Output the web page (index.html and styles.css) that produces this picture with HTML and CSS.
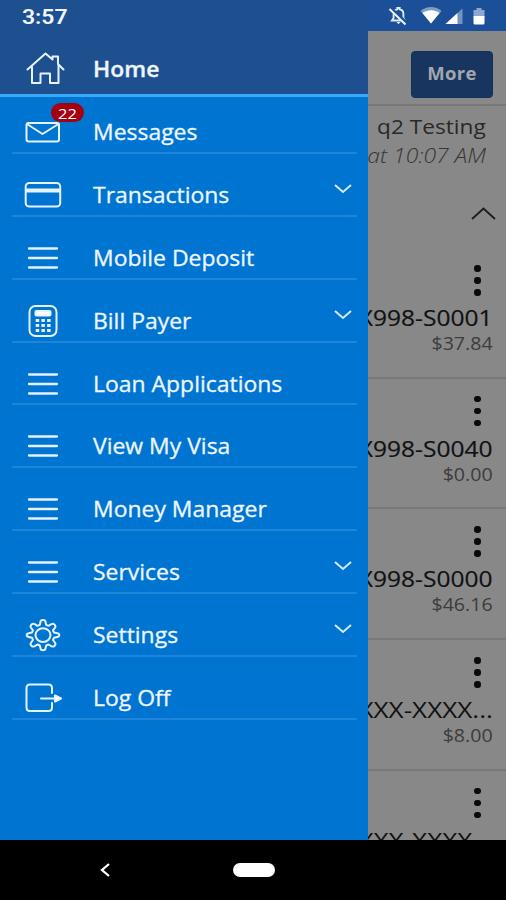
FILE: index.html
```html
<!DOCTYPE html>
<html lang="en">
<head>
  <meta charset="UTF-8">
  <meta name="viewport" content="width=device-width, initial-scale=1.0">
  <title>Mobile Banking</title>
  <link rel="stylesheet" href="styles.css">
</head>
<body>
  <header class="status-bar">
    <span class="clock">3:57</span>
    <svg class="status-icons" width="102" height="31" viewBox="0 0 102 31">
      <g transform="translate(-2 0)">
        <path d="M6 20.500h13l-1.600-2.500v-4c0-2.500-1.300-4.200-3.700-4.700V8h-2.400v1.300c-2.400.5-3.700 2.200-3.700 4.700v4z" fill="none" stroke="#dfe9f6" stroke-width="1.900"/>
        <path d="M10.500 22h4l-2 2.300z" fill="#dfe9f6"/>
        <path d="M4.500 8.500l16 15" stroke="#1c4f96" stroke-width="4"/>
        <path d="M3.500 9l16 15.500" stroke="#f2f6fc" stroke-width="1.900"/>
      </g>
      <g transform="translate(8 -.5)">
        <path d="M35 24L24.500 11.500c6-5.300 15-5.300 21 0z" fill="#7f9cc8"/>
        <path d="M35 24L26.500 13.500c5-3.600 12-3.600 17 0z" fill="#fff"/>
        <path d="M49.500 24.500L66.500 9v15.500z" fill="#7593c1"/>
        <path d="M49.500 24.500L61.500 13.500v11z" fill="#fff"/>
        <path d="M77.500 10.500h3V8.500h5v2h3v7H77.500v-7z" fill="#8ea7cd"/>
        <path d="M77.500 16.500H88.500V23.500q0 1.500-1.500 1.500H79q-1.500 0-1.500-1.500z" fill="#fff"/>
      </g>
    </svg>
  </header>

  <main class="content">
    <nav class="drawer">
      <a class="item home">
        <svg class="icon" viewBox="0 0 40 40">
          <path d="M2.500 20.500L20.500 4.500l7 6V7.500h5.500v7.500l5.500 5.500M7 17.500v16.500h8.500V24.500h9.500V34h8.500V16"/>
        </svg>
        <span class="label">Home</span>
      </a>
      <a class="item first">
        <svg class="icon" viewBox="0 0 40 40">
          <rect x="1.500" y="11" width="32.500" height="18.500" rx="2"/>
          <path d="M2 12l15.500 10L33.500 12"/>
        </svg>
        <span class="badge"><span>22</span></span>
        <span class="label">Messages</span>
      </a>
      <a class="item">
        <svg class="icon" viewBox="0 0 40 40">
          <rect x=".7" y="8" width="34.500" height="23.500" rx="3.500"/>
          <path d="M1 15.500h34" stroke-width="4" stroke-linecap="butt"/>
        </svg>
        <span class="label">Transactions</span>
        <svg class="chevron" viewBox="0 0 18 10"><path d="M1 1l8 7 8-7"/></svg>
      </a>
      <a class="item">
        <svg class="icon" viewBox="0 0 40 40"><path d="M4 10.500h28M4 20h28M4 29.500h28" stroke-width="2.300"/></svg>
        <span class="label">Mobile Deposit</span>
      </a>
      <a class="item">
        <svg class="icon" viewBox="0 0 40 40">
          <rect x="4.500" y="5" width="27" height="30" rx="6"/>
          <rect class="solid" x="10.500" y="10" width="15" height="4.500" rx="1"/>
          <path d="M10.700 19.500h15M10.700 24.500h15M10.700 29.500h15" stroke-width="2.800" stroke-dasharray="3.500 2.200" stroke-linecap="butt"/>
        </svg>
        <span class="label">Bill Payer</span>
        <svg class="chevron" viewBox="0 0 18 10"><path d="M1 1l8 7 8-7"/></svg>
      </a>
      <a class="item">
        <svg class="icon" viewBox="0 0 40 40"><path d="M4 10.500h28M4 20h28M4 29.500h28" stroke-width="2.300"/></svg>
        <span class="label">Loan Applications</span>
      </a>
      <a class="item">
        <svg class="icon" viewBox="0 0 40 40"><path d="M4 10.500h28M4 20h28M4 29.500h28" stroke-width="2.300"/></svg>
        <span class="label">View My Visa</span>
      </a>
      <a class="item">
        <svg class="icon" viewBox="0 0 40 40"><path d="M4 10.500h28M4 20h28M4 29.500h28" stroke-width="2.300"/></svg>
        <span class="label">Money Manager</span>
      </a>
      <a class="item">
        <svg class="icon" viewBox="0 0 40 40"><path d="M4 10.500h28M4 20h28M4 29.500h28" stroke-width="2.300"/></svg>
        <span class="label">Services</span>
        <svg class="chevron" viewBox="0 0 18 10"><path d="M1 1l8 7 8-7"/></svg>
      </a>
      <a class="item">
        <svg class="icon" viewBox="0 0 40 40">
          <path d="M15.500 7q0-2 2.500-2t2.500 2l.7 2.800 2.300 1 2.800-1.700q1.800-1 3.300.5t.3 3.200L28 15.300l1 2.200 3.300.7q2 .3 2 1.900t-2 1.900l-3.300.7-1 2.300 1.900 2.500q1.200 1.700-.3 3.200t-3.300.5l-2.800-1.700-2.300 1-.7 2.800q0 2-2.500 2t-2.500-2l-.7-2.800-2.300-1-2.800 1.700q-1.800 1-3.300-.5t-.3-3.200L8 25l-1-2.300-3.300-.7q-2-.3-2-1.900t2-1.900l3.300-.7 1-2.200-1.900-2.500q-1.200-1.700.3-3.200t3.300-.5l2.800 1.700 2.300-1z"/>
          <ellipse cx="18" cy="20.100" rx="7.500" ry="6.800"/>
        </svg>
        <span class="label">Settings</span>
        <svg class="chevron" viewBox="0 0 18 10"><path d="M1 1l8 7 8-7"/></svg>
      </a>
      <a class="item">
        <svg class="icon" viewBox="0 0 40 40">
          <path d="M27 15v-5q0-3.500-3.500-3.500H5Q1.500 6.500 1.500 10v19.500q0 3.500 3.500 3.500h18.500q3.500 0 3.500-3.500v-4.500M16 20.500H30"/>
          <path class="solid" d="M30 17.500l6 3-6 3z"/>
        </svg>
        <span class="label">Log Off</span>
      </a>
    </nav>

    <section class="page">
      <div class="toolbar"><button class="more">More</button></div>
      <div class="greeting">
        <p class="user">q2 Testing</p>
        <p class="login">at 10:07 AM</p>
      </div>
      <div class="group">
        <svg width="25" height="13" viewBox="0 0 25 13"><path d="M1 12L12.500 1.500 24 12" fill="none" stroke="#1c1c1c" stroke-width="1.800"/></svg>
      </div>
      <div class="account">
        <div class="dots"><i></i><i></i><i></i></div>
        <p class="name">X998-S0001</p>
        <p class="amount">$37.84</p>
      </div>
      <div class="account">
        <div class="dots"><i></i><i></i><i></i></div>
        <p class="name">X998-S0040</p>
        <p class="amount">$0.00</p>
      </div>
      <div class="account">
        <div class="dots"><i></i><i></i><i></i></div>
        <p class="name">X998-S0000</p>
        <p class="amount">$46.16</p>
      </div>
      <div class="account">
        <div class="dots"><i></i><i></i><i></i></div>
        <p class="name masked">XXX-XXXX...</p>
        <p class="amount">$8.00</p>
      </div>
      <div class="account">
        <div class="dots"><i></i><i></i><i></i></div>
        <p class="name masked">XXX-XXXX...</p>
      </div>
    </section>
  </main>

  <footer class="nav-bar">
    <svg class="back" width="10" height="14" viewBox="0 0 10 14"><path d="M9 1L2 7l7 6" fill="none" stroke="#fff" stroke-width="2.300"/></svg>
    <span class="pill"></span>
  </footer>
</body>
</html>
```
FILE: styles.css
```css
* {
  box-sizing: border-box;
}

body {
  margin: 0;
  width: 506px;
  height: 900px;
  overflow: hidden;
  display: flex;
  flex-direction: column;
  font-family: "Open Sans", sans-serif;
  background: #000;
}

p {
  margin: 0;
}

.status-bar {
  height: 31px;
  flex: none;
  display: flex;
  justify-content: space-between;
  align-items: center;
  padding: 0 16px 0 22px;
  background: linear-gradient(90deg, #1e5090 368px, #1b4f98 368px);
}

.clock {
  font: 600 20.500px/31px Roboto, sans-serif;
  color: #f2f6fc;
  transform: scaleX(1.12);
  transform-origin: left;
  padding-top: 3px;
}

.content {
  height: 808.500px;
  flex: none;
  display: flex;
  overflow: hidden;
}

.drawer {
  width: 368px;
  flex: none;
  background: #0074d1;
}

.item {
  display: flex;
  align-items: center;
  position: relative;
  height: 62.900px;
  margin: 0 11px 0 12px;
  padding: 21px 5.500px 0 13px;
  border-bottom: 2px solid #1f84da;
  color: #eef6ff;
}

.item.first {
  height: 56.900px;
  padding-top: 15px;
}

.item.home {
  height: 66px;
  margin: 0;
  padding: 13px 0 0 25px;
  background: #1e5090;
  border-bottom: 3px solid #3ba8f8;
}

.icon {
  width: 40px;
  height: 40px;
  flex: none;
  overflow: visible;
  fill: none;
  stroke: #e6f2ff;
  stroke-width: 2;
  stroke-linejoin: round;
  stroke-linecap: round;
}

.icon .solid {
  fill: #fff;
}

.label {
  margin-left: 28px;
  font-size: 21.200px;
  font-weight: 500;
  line-height: 30px;
  white-space: nowrap;
  -webkit-text-stroke: 0.300px;
  transform: scaleX(1.083);
  transform-origin: left;
}

.home .label {
  font-weight: 600;
}

.badge {
  position: absolute;
  left: 39px;
  top: 6px;
  width: 33px;
  height: 19px;
  border-radius: 10px;
  background: #a30010;
  color: #fff;
  font-size: 15px;
  font-weight: 500;
  line-height: 21px;
  text-align: center;
}

.badge span {
  display: block;
  transform: scaleX(1.1);
}

.chevron {
  width: 18px;
  height: 10px;
  margin-left: auto;
  margin-bottom: 12px;
  fill: none;
  stroke: #d6eaff;
  stroke-width: 2;
}

.page {
  flex: 1;
  min-width: 0;
  overflow: hidden;
  background: #888;
}

.toolbar {
  height: 75px;
  display: flex;
  justify-content: flex-end;
  padding: 20px 13px 0 0;
  border-bottom: 2px solid #777;
}

.more {
  width: 82px;
  height: 47px;
  padding: 0 0 5px;
  border: 1px solid #143158;
  border-radius: 4px;
  background: #18355f;
  color: #a3a7ad;
  font: 700 18.500px "Open Sans", sans-serif;
  letter-spacing: 0.300px;
}

.greeting {
  height: 84px;
  display: flex;
  flex-direction: column;
  align-items: flex-end;
  padding: 5px 20px 0 0;
  white-space: nowrap;
  line-height: 30px;
}

.user {
  font-size: 20.800px;
  color: #292929;
  transform: scaleX(1.09);
  transform-origin: right;
}

.login {
  margin-top: -1px;
  font-size: 20.800px;
  font-style: italic;
  font-weight: 300;
  color: #363636;
  transform: scaleX(1.1);
  transform-origin: right;
}

.group {
  height: 58px;
  display: flex;
  justify-content: flex-end;
  padding: 17px 10px 0 0;
}

.account {
  height: 130.700px;
  display: flex;
  flex-direction: column;
  align-items: flex-end;
  padding: 17px 13px 0 0;
  border-bottom: 2px solid #797979;
  white-space: nowrap;
}

.dots {
  display: flex;
  flex-direction: column;
  gap: 5.500px;
  padding-right: 12.500px;
}

.dots i {
  width: 6.500px;
  height: 6.500px;
  border-radius: 50%;
  background: #0a0a0a;
}

.name {
  margin-top: 7.500px;
  font-size: 22.300px;
  font-weight: 500;
  line-height: 30px;
  color: #111;
  -webkit-text-stroke: 0.200px;
  transform: scaleX(1.1);
  transform-origin: right;
}

.name.masked {
  font-weight: 400;
  -webkit-text-stroke: 0;
  transform: scaleX(1.17);
}

.amount {
  font-size: 17.500px;
  line-height: 20px;
  color: #3c3c3c;
  transform: scaleX(1.12);
  transform-origin: right;
}

.nav-bar {
  flex: 1;
  display: flex;
  align-items: center;
  padding-left: 100px;
}

.pill {
  width: 42px;
  height: 14px;
  margin-left: 123px;
  border-radius: 7px;
  background: #fff;
}
```
